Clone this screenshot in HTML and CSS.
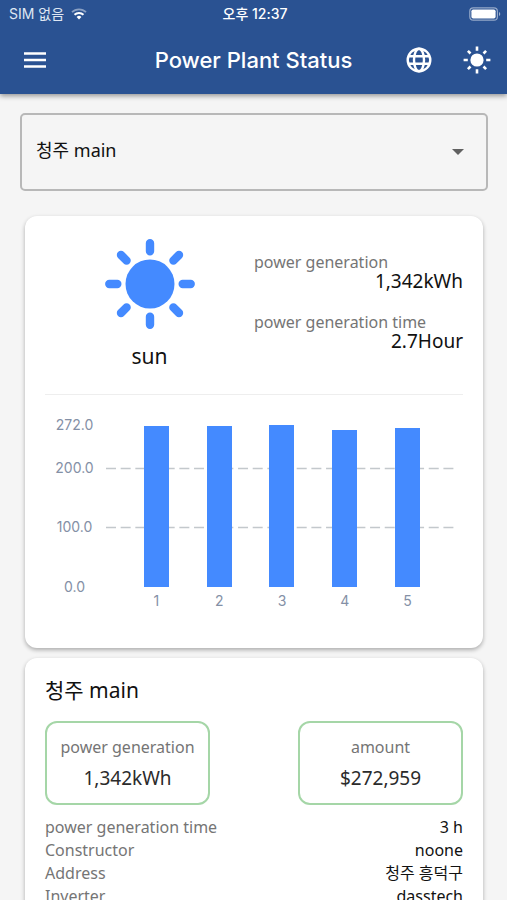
FILE: index.html
```html
<!DOCTYPE html>
<html lang="ko">
<head>
<meta charset="utf-8">
<meta name="viewport" content="width=device-width, initial-scale=1">
<title>Power Plant Status</title>
<link rel="stylesheet" href="styles.css">
</head>
<body>
<div class="app">
  <header class="header">
    <div class="status">
      <div class="status-left">
        <span>SIM 없음</span>
        <svg class="wifi" viewBox="0 0 16 12" aria-hidden="true">
          <path d="M1 4.2a10 10 0 0 1 14 0" fill="none" stroke="#fff" stroke-opacity=".45" stroke-width="1.8"/>
          <path d="M3.5 6.8a6.4 6.4 0 0 1 9 0" fill="none" stroke="#fff" stroke-width="1.9"/>
          <path d="M5.6 9a3.4 3.4 0 0 1 4.8 0L8 11.5z" fill="#fff"/>
        </svg>
      </div>
      <span class="clock">오후 12:37</span>
      <div class="status-right">
        <svg class="battery" viewBox="0 0 32 14" aria-hidden="true">
          <rect x=".8" y=".8" width="27.6" height="12.4" rx="3.5" fill="none" stroke="#fff" stroke-opacity=".5" stroke-width="1.2"/>
          <rect x="2.4" y="2.4" width="24.2" height="9.2" rx="1.8" fill="#fff"/>
          <path d="M30 5v4a2.2 2.2 0 0 0 0-4z" fill="#fff" fill-opacity=".55"/>
        </svg>
      </div>
    </div>
    <div class="toolbar">
      <button class="icon-button" type="button" aria-label="Menu">
        <svg class="icon-menu" viewBox="0 0 24 16" aria-hidden="true"><path d="M1 1.4h22M1 8h22M1 14.6h22" stroke="#fff" stroke-width="2.5"/></svg>
      </button>
      <h1 class="title">Power Plant Status</h1>
      <div class="actions">
        <button class="icon-button" type="button" aria-label="Language">
          <svg class="icon-globe" viewBox="0 0 26 26" fill="none" stroke="#fff" stroke-width="2.4" aria-hidden="true">
            <circle cx="13" cy="13" r="11.3"/>
            <ellipse cx="13" cy="13" rx="5" ry="11.3"/>
            <path d="M2.4 9.2h21.2M2.4 16.8h21.2"/>
          </svg>
        </button>
        <button class="icon-button" type="button" aria-label="Weather">
          <svg class="icon-sun" viewBox="0 0 28 28" aria-hidden="true">
            <circle cx="14" cy="14" r="6.6" fill="#fff"/>
            <path d="M14 .6v4.2M14 23.2v4.2M.6 14h4.2M23.2 14h4.2M4.9 4.9l2.6 2.6M20.5 20.5l2.6 2.6M4.9 23.1l2.6-2.6M20.5 7.5l2.6-2.6" stroke="#fff" stroke-width="2.6"/>
          </svg>
        </button>
      </div>
    </div>
  </header>

  <main class="content">
    <div class="picker">
      <select class="plant" aria-label="Power plant"><option>청주 main</option></select>
      <svg class="arrow" viewBox="0 0 12 6" aria-hidden="true"><path d="M0 0h12L6 6z" fill="#616161"/></svg>
    </div>

    <section class="card">
      <div class="summary">
        <div class="weather">
          <svg class="sun" viewBox="0 0 90 90" aria-hidden="true">
            <circle cx="45" cy="45" r="24.5" fill="#448aff"/>
            <path d="M45 4.3v8M45 77.7v8M4.3 45h8M77.7 45h8M16 16l5.6 5.6M68.4 68.4l5.6 5.6M16 74l5.6-5.6M68.4 21.6L74 16" stroke="#448aff" stroke-width="8.4" stroke-linecap="round"/>
          </svg>
          <span class="weather-name">sun</span>
        </div>
        <dl class="figures">
          <div><dt>power generation</dt><dd>1,342kWh</dd></div>
          <div><dt>power generation time</dt><dd>2.7Hour</dd></div>
        </dl>
      </div>
      <div class="chart">
        <div class="y-axis"><span>272.0</span><span>200.0</span><span>100.0</span><span>0.0</span></div>
        <div class="plot">
          <svg class="grid-lines" aria-hidden="true">
            <line x1="0" y1="43.5" x2="100%" y2="43.5"/>
            <line x1="0" y1="102.5" x2="100%" y2="102.5"/>
          </svg>
          <div class="bar" style="height:99.3%"></div>
          <div class="bar" style="height:99.3%"></div>
          <div class="bar" style="height:100%"></div>
          <div class="bar" style="height:97%"></div>
          <div class="bar" style="height:98.2%"></div>
        </div>
        <div class="x-axis"><span>1</span><span>2</span><span>3</span><span>4</span><span>5</span></div>
      </div>
    </section>

    <section class="card">
      <h2 class="plant-name">청주 main</h2>
      <div class="tiles">
        <div class="tile"><span class="tile-label">power generation</span><span class="tile-value">1,342kWh</span></div>
        <div class="tile"><span class="tile-label">amount</span><span class="tile-value">$272,959</span></div>
      </div>
      <dl class="details">
        <dt>power generation time</dt><dd>3 h</dd>
        <dt>Constructor</dt><dd>noone</dd>
        <dt>Address</dt><dd>청주 흥덕구</dd>
        <dt>Inverter</dt><dd>dasstech</dd>
      </dl>
    </section>
  </main>
</div>
</body>
</html>
```
FILE: styles.css
```css
* { box-sizing: border-box; }

body {
  margin: 0;
  background: #f5f5f5;
  color: #111;
  font-family: "Noto Sans", "Noto Sans CJK KR", sans-serif;
  font-size: 16px;
}

h1, h2, dl, dd { margin: 0; font-weight: 400; }

.app {
  display: flex;
  flex-direction: column;
  height: 100vh;
}

.header {
  position: relative;
  flex: none;
  background: #2a5292;
  color: #fff;
  font-family: Inter, "Noto Sans CJK KR", sans-serif;
  box-shadow: 0 2px 5px rgba(0, 0, 0, .4);
}

.status {
  display: grid;
  grid-template-columns: 1fr auto 1fr;
  align-items: center;
  height: 26px;
  padding: 2px 6px 0 9px;
  font-size: 14px;
  line-height: 24px;
}

.status-left { display: flex; align-items: center; gap: 7px; color: #dfe7f3; }
.clock { font-weight: 500; }
.status-right { display: flex; justify-content: flex-end; }
.wifi { width: 16px; height: 12px; }
.battery { width: 32px; height: 14px; }

.toolbar {
  display: grid;
  grid-template-columns: 1fr auto 1fr;
  align-items: center;
  height: 68px;
  padding: 0 16px;
}

.title { font-size: 22px; line-height: 28px; font-weight: 500; }
.actions { display: flex; justify-content: flex-end; align-items: center; gap: 31px; }

.icon-button {
  display: flex;
  justify-self: start;
  padding: 0;
  border: 0;
  background: none;
}

.icon-menu { width: 24px; height: 16px; margin-left: 7px; }
.icon-globe { width: 26px; height: 26px; }
.icon-sun { width: 28px; height: 28px; }

.content {
  flex: 1;
  min-height: 0;
  padding: 19px 24px 24px 25px;
  overflow-y: auto;
  scrollbar-width: none;
}

.picker {
  display: grid;
  align-items: center;
  margin: 0 -5px 25px;
}

.plant, .arrow { grid-area: 1 / 1; }

.plant {
  appearance: none;
  width: 100%;
  height: 78px;
  padding: 0 14px 4px;
  border: 2px solid #b8b8b8;
  border-radius: 5px;
  background: transparent;
  color: #111;
  font-family: inherit;
  font-size: 18px;
}

.arrow {
  justify-self: end;
  width: 12px;
  height: 6px;
  margin-right: 24px;
  pointer-events: none;
}

.card {
  margin-bottom: 10px;
  padding: 20px;
  border-radius: 12px;
  background: #fff;
  box-shadow: 0 2px 4px rgba(0, 0, 0, .3);
}

.summary {
  display: grid;
  grid-template-columns: 1fr 1fr;
  height: 159px;
  border-bottom: 1px solid #eee;
}

.weather { display: flex; flex-direction: column; align-items: center; gap: 13px; padding-top: 3px; }
.sun { width: 90px; height: 90px; }
.weather-name { font-size: 21px; line-height: 28px; }

.figures { display: flex; flex-direction: column; gap: 22px; padding-top: 16px; }
.figures dt { color: #757575; font-size: 16px; line-height: 20px; }
.figures dd { font-size: 19px; line-height: 18px; text-align: right; }

.chart {
  display: grid;
  grid-template-columns: 61px 1fr;
  padding: 30px 9px 17px 0;
  color: #8490a6;
  font-family: Inter, sans-serif;
  font-size: 14px;
  line-height: 20px;
}

.y-axis {
  display: grid;
  grid-template-rows: 43px 59px 60px 0;
  padding-right: 2px;
  text-align: center;
}

.y-axis span { margin-top: -10px; }

.plot, .x-axis {
  display: grid;
  grid-template-columns: repeat(5, 1fr);
  justify-items: center;
  padding: 0 15px 0 19px;
}

.plot { position: relative; align-items: end; height: 162px; }
.x-axis { grid-column: 2; padding-top: 4px; }
.bar { position: relative; width: 25px; background: #448aff; }

.grid-lines {
  position: absolute;
  inset: 0;
  width: 100%;
  height: 100%;
  stroke: #c3c8cc;
  stroke-width: 1.4;
  stroke-dasharray: 10 4.67;
}

.plant-name { font-size: 21px; line-height: 24px; }

.tiles {
  display: flex;
  justify-content: space-between;
  gap: 16px;
  margin: 19px 0 11px;
}

.tile {
  display: flex;
  flex-direction: column;
  align-items: center;
  gap: 7px;
  flex: 0 1 165px;
  padding: 12px 8px 13px;
  border: 2px solid #a5d6a7;
  border-radius: 12px;
}

.tile-label { color: #757575; font-size: 16px; line-height: 24px; white-space: nowrap; }
.tile-value { color: #2b2b2b; font-size: 19px; line-height: 24px; }

.details {
  display: grid;
  grid-template-columns: auto auto;
  grid-auto-rows: 23px;
  line-height: 23px;
}

.details dt { color: #757575; }
.details dd { text-align: right; }
```
